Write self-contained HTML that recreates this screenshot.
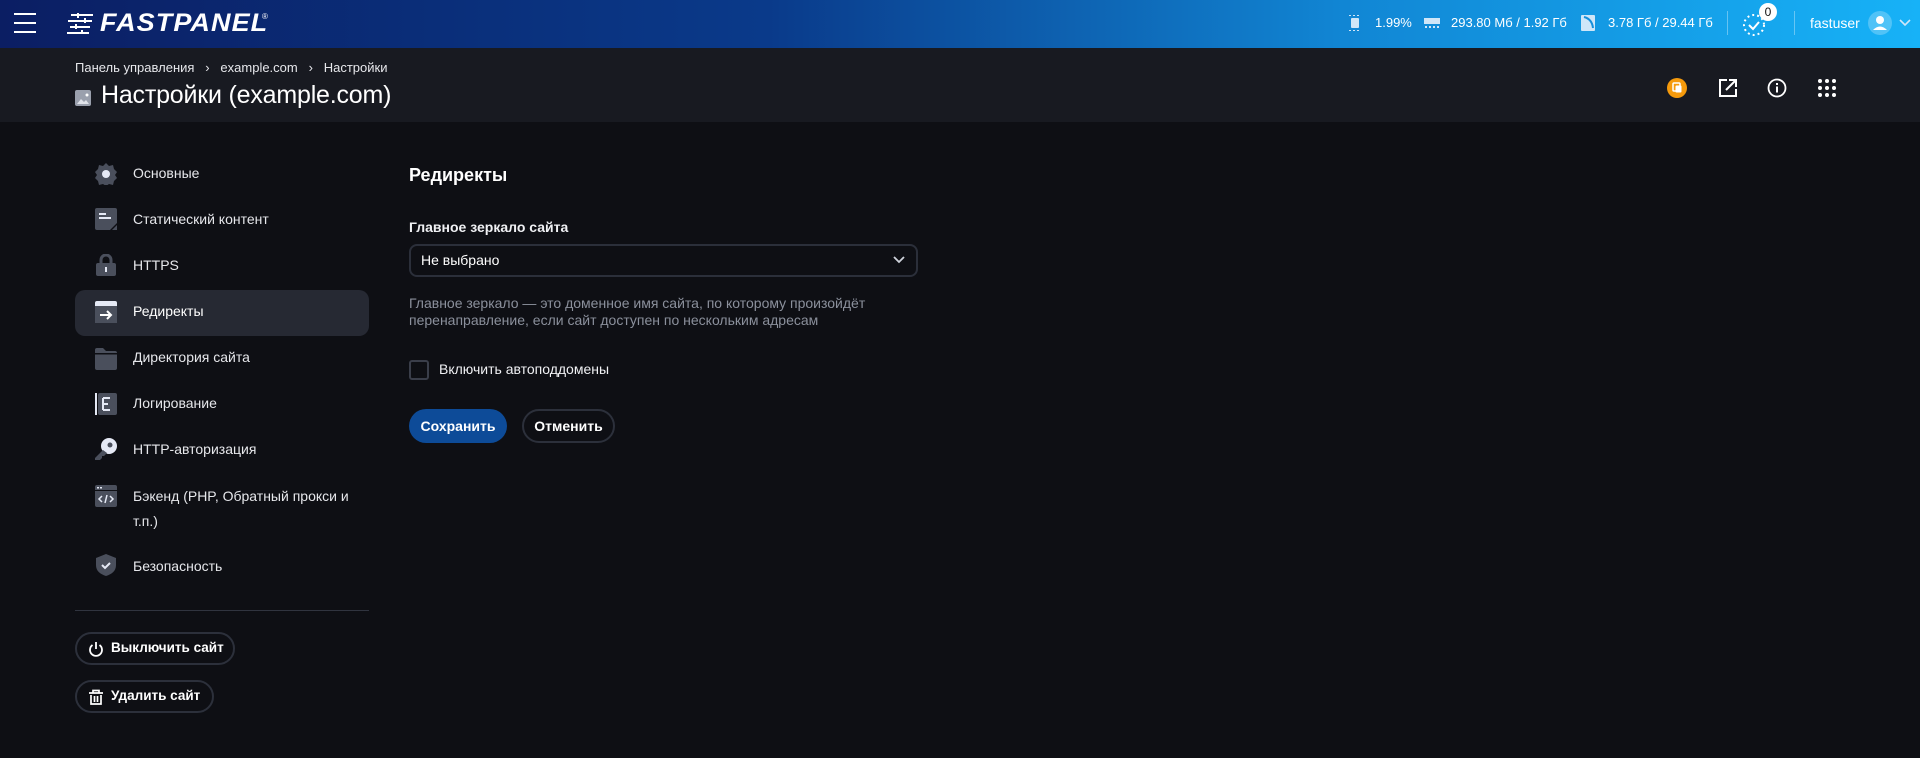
<!DOCTYPE html>
<html><head><meta charset="utf-8"><style>
*{margin:0;padding:0;box-sizing:border-box}
body{width:1920px;height:758px;overflow:hidden;background:#0e0f14;font-family:"Liberation Sans",sans-serif;color:#e9eaee;position:relative}
.a{position:absolute}
.hdr{left:0;top:0;width:1920px;height:48px;background:linear-gradient(90deg,#0b1e63 0%,#0a3a8a 40%,#1186d4 70%,#17b2f7 100%)}
.bar{left:0;top:48px;width:1920px;height:74px;background:#181a21}
.st{font-size:13px;color:#fff;top:15px}
.nav{font-size:14px;color:#e6e7eb}
.ic{left:95px;width:22px;height:22px}
.btn{border:2px solid #2c303b;border-radius:17px;font-size:14px;font-weight:bold;color:#fff}
</style></head><body>
<div class="a hdr"></div>
<div class="a" style="left:14px;top:13px;width:22px;height:2px;background:#fff"></div>
<div class="a" style="left:14px;top:22px;width:22px;height:2px;background:#fff"></div>
<div class="a" style="left:14px;top:31px;width:22px;height:2px;background:#fff"></div>
<svg class="a" style="left:67px;top:13px" width="27" height="21" viewBox="0 0 27 21"><g stroke="#fff" stroke-width="2"><path d="M4 2h22M1 8h24M3 14h20M0 20h22"/></g><g fill="#fff"><rect x="10" y="0" width="2" height="5"/><rect x="17" y="5" width="2" height="5"/><rect x="8" y="11" width="2" height="5"/><rect x="14" y="17" width="2" height="4"/></g></svg>
<div class="a" style="left:100px;top:9px;font-size:25px;font-weight:bold;font-style:italic;color:#fff;letter-spacing:1px;transform:scaleX(1.08);transform-origin:left">FASTPANEL</div>
<div class="a" style="left:262px;top:12px;font-size:8px;color:#fff">®</div>

<svg class="a" style="left:1349px;top:15px" width="12" height="16"><rect x="2" y="3" width="8" height="10" rx="1" fill="#cfe6f8"/><g fill="#cfe6f8"><rect x="0" y="0" width="2" height="1"/><rect x="4" y="0" width="2" height="1"/><rect x="8" y="0" width="2" height="1"/><rect x="0" y="15" width="2" height="1"/><rect x="4" y="15" width="2" height="1"/><rect x="8" y="15" width="2" height="1"/></g></svg>
<div class="a st" style="left:1375px">1.99%</div>
<svg class="a" style="left:1424px;top:17px" width="16" height="12"><rect x="0" y="1" width="16" height="6" fill="#cfe6f8"/><g fill="#cfe6f8"><rect x="1" y="9" width="2" height="2"/><rect x="5" y="9" width="2" height="2"/><rect x="9" y="9" width="2" height="2"/><rect x="13" y="9" width="2" height="2"/></g></svg>
<div class="a st" style="left:1451px">293.80 Мб / 1.92 Гб</div>
<svg class="a" style="left:1581px;top:15px" width="14" height="16"><rect width="14" height="16" rx="1" fill="#cfe6f8"/><path d="M3 2q8 2 9 11" stroke="#158fdb" stroke-width="2" fill="none"/></svg>
<div class="a st" style="left:1608px">3.78 Гб / 29.44 Гб</div>
<div class="a" style="left:1727px;top:11px;width:1px;height:24px;background:rgba(255,255,255,.35)"></div>
<svg class="a" style="left:1742px;top:12px" width="26" height="26"><circle cx="12" cy="13" r="10" stroke="#fff" stroke-width="2" fill="none" stroke-dasharray="2 3"/><path d="M7 13l4 4 6-7" stroke="#fff" stroke-width="2" fill="none"/></svg>
<div class="a" style="left:1759px;top:3px;width:18px;height:18px;border-radius:9px;background:#fff;color:#111;font-size:12px;text-align:center;line-height:18px">0</div>
<div class="a" style="left:1794px;top:11px;width:1px;height:24px;background:rgba(255,255,255,.35)"></div>
<div class="a st" style="left:1810px;font-size:14px">fastuser</div>
<div class="a" style="left:1868px;top:11px;width:24px;height:24px;border-radius:12px;background:rgba(255,255,255,.25)"></div>
<svg class="a" style="left:1868px;top:11px" width="24" height="24"><circle cx="12" cy="9" r="4" fill="#fff"/><path d="M5 19q7-7 14 0z" fill="#fff"/></svg>
<svg class="a" style="left:1899px;top:19px" width="12" height="8"><path d="M1 1l5 5 5-5" stroke="#cfe6f8" stroke-width="1.6" fill="none"/></svg>

<div class="a bar"></div>
<div class="a" style="left:75px;top:60px;font-size:13px;color:#e6e7eb">Панель управления&nbsp;&nbsp;&nbsp;›&nbsp;&nbsp;&nbsp;example.com&nbsp;&nbsp;&nbsp;›&nbsp;&nbsp;&nbsp;Настройки</div>
<svg class="a" style="left:75px;top:90px" width="16" height="16"><rect width="16" height="16" rx="2" fill="#9aa0ad"/><path d="M2 14l4-5 3 3 2-2 3 4z" fill="#e0e3ea"/><circle cx="12" cy="5" r="1.5" fill="#fff"/></svg>
<div class="a" style="left:101px;top:81px;font-size:25px;color:#fff;letter-spacing:-0.2px">Настройки (example.com)</div>
<div class="a" style="left:1667px;top:78px;width:20px;height:20px;border-radius:10px;background:#f59a0c"></div>
<svg class="a" style="left:1667px;top:78px" width="20" height="20"><rect x="6" y="5" width="7" height="8" rx="1" stroke="#fff" stroke-width="1.5" fill="none"/><rect x="8.5" y="7.5" width="6" height="7" rx="1" fill="#fff"/></svg>
<svg class="a" style="left:1718px;top:78px" width="20" height="20"><path d="M9 2H2v16h16v-7" stroke="#fff" stroke-width="2" fill="none"/><path d="M8 12l9-9M11 2h7v7" stroke="#fff" stroke-width="2" fill="none"/></svg>
<svg class="a" style="left:1767px;top:78px" width="20" height="20"><circle cx="10" cy="10" r="8.5" stroke="#fff" stroke-width="1.8" fill="none"/><rect x="9" y="8.5" width="2" height="6" fill="#fff"/><rect x="9" y="5" width="2" height="2" fill="#fff"/></svg>
<svg class="a" style="left:1818px;top:79px" width="18" height="18" fill="#fff"><circle cx="2" cy="2" r="2"/><circle cx="9" cy="2" r="2"/><circle cx="16" cy="2" r="2"/><circle cx="2" cy="9" r="2"/><circle cx="9" cy="9" r="2"/><circle cx="16" cy="9" r="2"/><circle cx="2" cy="16" r="2"/><circle cx="9" cy="16" r="2"/><circle cx="16" cy="16" r="2"/></svg>

<div class="a" style="left:75px;top:290px;width:294px;height:46px;border-radius:10px;background:#262933"></div>
<svg class="a ic" style="top:163px"><path d="M11 0l3 3 4-1 1 4 3 3-2 3 2 3-3 3-1 4-4-1-3 2-3-2-4 1-1-4-3-3 2-3-2-3 3-3 1-4 4 1z" fill="#4a4f5c"/><circle cx="11" cy="11" r="4" fill="#e5e9f5"/></svg>
<div class="a nav" style="left:133px;top:165px">Основные</div>
<svg class="a ic" style="top:208px"><path d="M2 0h18a2 2 0 0 1 2 2v13l-7 7H2a2 2 0 0 1-2-2V2a2 2 0 0 1 2-2z" fill="#4a4f5c"/><rect x="4" y="5" width="7" height="2" fill="#e5e9f5"/><rect x="4" y="9" width="12" height="2" fill="#e5e9f5"/><path d="M22 17l-5 5h5z" fill="#4a4f5c"/></svg>
<div class="a nav" style="left:133px;top:211px">Статический контент</div>
<svg class="a ic" style="top:254px"><path d="M6 9V6a5 5 0 0 1 10 0v3" stroke="#4a4f5c" stroke-width="3" fill="none"/><rect x="1" y="9" width="20" height="13" rx="2" fill="#4a4f5c"/><rect x="10" y="13" width="2" height="5" fill="#e5e9f5"/></svg>
<div class="a nav" style="left:133px;top:257px">HTTPS</div>
<svg class="a ic" style="top:301px"><rect width="22" height="22" rx="2" fill="#e5e9f5"/><rect y="5" width="22" height="17" fill="#4a4f5c"/><path d="M5 14h11M12 10l4 4-4 4" stroke="#fff" stroke-width="2" fill="none"/></svg>
<div class="a nav" style="left:133px;top:303px;color:#fff">Редиректы</div>
<svg class="a ic" style="top:348px"><path d="M0 2a2 2 0 0 1 2-2h6l3 3h9a2 2 0 0 1 2 2v15a2 2 0 0 1-2 2H2a2 2 0 0 1-2-2z" fill="#4a4f5c"/><rect y="5" width="22" height="1.5" fill="#0e0f14"/></svg>
<div class="a nav" style="left:133px;top:349px">Директория сайта</div>
<svg class="a ic" style="top:393px"><rect x="3" width="19" height="22" rx="2" fill="#4a4f5c"/><rect x="0" width="2" height="22" fill="#e5e9f5"/><path d="M8 5h7M8 11h5M8 17h7M8 5v12" stroke="#e5e9f5" stroke-width="2"/></svg>
<div class="a nav" style="left:133px;top:395px">Логирование</div>
<svg class="a ic" style="top:438px"><circle cx="14" cy="8" r="8" fill="#e5e9f5"/><circle cx="15" cy="7" r="2.5" fill="#4a4f5c"/><path d="M8 12L0 20v2h5l2-2v-2h2l3-3z" fill="#4a4f5c"/></svg>
<div class="a nav" style="left:133px;top:441px">HTTP-авторизация</div>
<svg class="a ic" style="top:485px"><rect width="22" height="22" rx="2" fill="#4a4f5c"/><rect y="5" width="22" height="1" fill="#0e0f14"/><rect x="2" y="2" width="2" height="1.5" fill="#e5e9f5"/><rect x="5" y="2" width="2" height="1.5" fill="#e5e9f5"/><path d="M7 11l-3 3 3 3M15 11l3 3-3 3M12 10l-2 8" stroke="#e5e9f5" stroke-width="1.5" fill="none"/></svg>
<div class="a nav" style="left:133px;top:484px;line-height:25px;width:240px">Бэкенд (PHP, Обратный прокси и т.п.)</div>
<svg class="a ic" style="top:554px"><path d="M11 0l10 4v7c0 6-4 9-10 11C5 20 1 17 1 11V4z" fill="#4a4f5c"/><path d="M7 11l3 3 5-5" stroke="#e5e9f5" stroke-width="2" fill="none"/></svg>
<div class="a nav" style="left:133px;top:558px">Безопасность</div>

<div class="a" style="left:75px;top:610px;width:294px;height:1px;background:#30343f"></div>
<div class="a btn" style="left:75px;top:632px;width:160px;height:33px"></div>
<svg class="a" style="left:88px;top:641px" width="16" height="16"><path d="M4.5 4a6 6 0 1 0 7 0M8 1v7" stroke="#fff" stroke-width="1.8" fill="none"/></svg>
<div class="a" style="left:111px;top:640px;font-size:13.5px;font-weight:bold;color:#fff">Выключить сайт</div>
<div class="a btn" style="left:75px;top:680px;width:139px;height:33px"></div>
<svg class="a" style="left:88px;top:689px" width="16" height="16"><path d="M1 4h14M5 4V1.5h6V4M3 6v9h10V6M6.5 7v6M9.5 7v6" stroke="#fff" stroke-width="1.7" fill="none"/></svg>
<div class="a" style="left:111px;top:688px;font-size:13.5px;font-weight:bold;color:#fff">Удалить сайт</div>

<div class="a" style="left:409px;top:165px;font-size:18px;font-weight:bold;color:#fff">Редиректы</div>
<div class="a" style="left:409px;top:219px;font-size:14px;font-weight:bold;color:#f0f1f4">Главное зеркало сайта</div>
<div class="a" style="left:409px;top:244px;width:509px;height:33px;border:2px solid #2b2f3a;border-radius:8px"></div>
<div class="a" style="left:421px;top:252px;font-size:14px;color:#fff">Не выбрано</div>
<svg class="a" style="left:893px;top:256px" width="12" height="8"><path d="M1 1l5 5 5-5" stroke="#cfd3dc" stroke-width="1.8" fill="none"/></svg>
<div class="a" style="left:409px;top:295px;font-size:14px;line-height:17px;color:#8b909c;width:500px">Главное зеркало — это доменное имя сайта, по которому произойдёт перенаправление, если сайт доступен по нескольким адресам</div>
<div class="a" style="left:409px;top:360px;width:20px;height:20px;border:2px solid #3a3e4a;border-radius:3px"></div>
<div class="a" style="left:439px;top:361px;font-size:14px;color:#f0f1f4">Включить автоподдомены</div>
<div class="a" style="left:409px;top:409px;width:98px;height:34px;border-radius:17px;background:#0d4b98"></div>
<div class="a" style="left:409px;top:418px;width:98px;text-align:center;font-size:14px;font-weight:bold;color:#fff">Сохранить</div>
<div class="a btn" style="left:522px;top:409px;width:93px;height:34px"></div>
<div class="a" style="left:522px;top:418px;width:93px;text-align:center;font-size:14px;font-weight:bold;color:#fff">Отменить</div>
</body></html>
